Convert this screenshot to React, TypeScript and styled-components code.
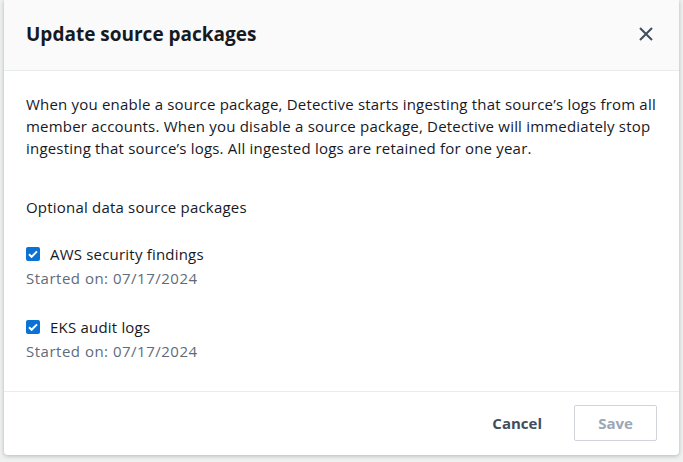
import styled, { createGlobalStyle } from "styled-components";

const GlobalStyle = createGlobalStyle`
  * {
    box-sizing: border-box;
  }

  body {
    margin: 0;
    background-color: #eff0f0;
    font-family: "Open Sans", "Noto Sans", sans-serif;
    color: #16191f;
  }
`;

const packages = [
  { name: "AWS security findings", started: "07/17/2024" },
  { name: "EKS audit logs", started: "07/17/2024" },
];

export default function App() {
  return (
    <Backdrop>
      <GlobalStyle />
      <Modal>
        <Header>
          <Title>Update source packages</Title>
          <CloseButton aria-label="Close">
            <svg width="16" height="16" viewBox="0 0 16 16">
              <path
                d="M2 2l12 12M14 2L2 14"
                stroke="#414d5c"
                strokeWidth="2"
                fill="none"
              />
            </svg>
          </CloseButton>
        </Header>

        <Content>
          <Paragraph>
            When you enable a source package, Detective starts ingesting that
            source’s logs from all member accounts. When you disable a source
            package, Detective will immediately stop ingesting that source’s
            logs. All ingested logs are retained for one year.
          </Paragraph>

          <SectionLabel>Optional data source packages</SectionLabel>

          <PackageList>
            {packages.map((p) => (
              <PackageItem key={p.name}>
                <CheckRow>
                  <Checkbox>
                    <svg width="14" height="14" viewBox="0 0 14 14">
                      <path
                        d="M3 7.2l2.6 2.6L11 4.4"
                        stroke="#ffffff"
                        strokeWidth="2"
                        fill="none"
                      />
                    </svg>
                  </Checkbox>
                  <CheckLabel>{p.name}</CheckLabel>
                </CheckRow>
                <StartedOn>Started on: {p.started}</StartedOn>
              </PackageItem>
            ))}
          </PackageList>
        </Content>

        <Footer>
          <LinkButton>Cancel</LinkButton>
          <SaveButton disabled>Save</SaveButton>
        </Footer>
      </Modal>
    </Backdrop>
  );
}

const Backdrop = styled.div`
  width: 683px;
  height: 462px;
  padding-left: 4px;
  overflow: hidden;
`;

const Modal = styled.div`
  width: 675px;
  height: 455px;

  display: flex;
  flex-direction: column;

  background-color: #ffffff;
  border-radius: 0 0 4px 4px;
  box-shadow: 0 1px 4px rgba(0, 7, 22, 0.25);
`;

const Header = styled.div`
  height: 71px;

  display: flex;
  align-items: center;
  justify-content: space-between;

  padding: 0 25px 0 22px;

  background-color: #fafafa;
  border-bottom: 1px solid #e9ebed;
`;

const Title = styled.h2`
  margin: 0 0 3px 0;

  font-size: 19px;
  font-weight: 700;
  line-height: 22px;
  color: #16191f;
`;

const CloseButton = styled.button`
  display: flex;
  align-items: center;
  justify-content: center;

  padding: 0;
  margin-bottom: 3px;

  background: none;
  border: none;
`;

const Content = styled.div`
  flex: 1;

  padding: 22px 20px 0 22px;

  font-size: 15px;
  line-height: 22px;
  letter-spacing: 0.2px;
`;

const Paragraph = styled.p`
  margin: 0 0 37px 0;
`;

const SectionLabel = styled.div`
  margin-bottom: 25px;
`;

const PackageList = styled.div`
  display: flex;
  flex-direction: column;
  gap: 27px;
`;

const PackageItem = styled.div`
  display: flex;
  flex-direction: column;
  gap: 2px;
`;

const CheckRow = styled.div`
  display: flex;
  align-items: center;
  gap: 10px;
`;

const Checkbox = styled.span`
  width: 14px;
  height: 14px;

  display: flex;
  align-items: center;
  justify-content: center;

  background-color: #0972d3;
  border-radius: 2px;
`;

const CheckLabel = styled.span`
  color: #16191f;
`;

const StartedOn = styled.div`
  color: #5f6b7a;
  letter-spacing: 0.5px;
`;

const Footer = styled.div`
  height: 64px;

  display: flex;
  align-items: center;
  justify-content: flex-end;
  gap: 18px;

  padding: 0 22px 1px 0;

  border-top: 1px solid #e9ebed;
`;

const LinkButton = styled.button`
  padding: 8px 14px;

  background: none;
  border: none;

  font-family: inherit;
  font-size: 15px;
  font-weight: 700;
  color: #414d5c;
`;

const SaveButton = styled.button`
  width: 83px;
  height: 36px;

  background-color: #ffffff;
  border: 1px solid #d1d5db;
  border-radius: 2px;

  font-family: inherit;
  font-size: 15px;
  font-weight: 700;
  color: #9ba7b6;
`;
